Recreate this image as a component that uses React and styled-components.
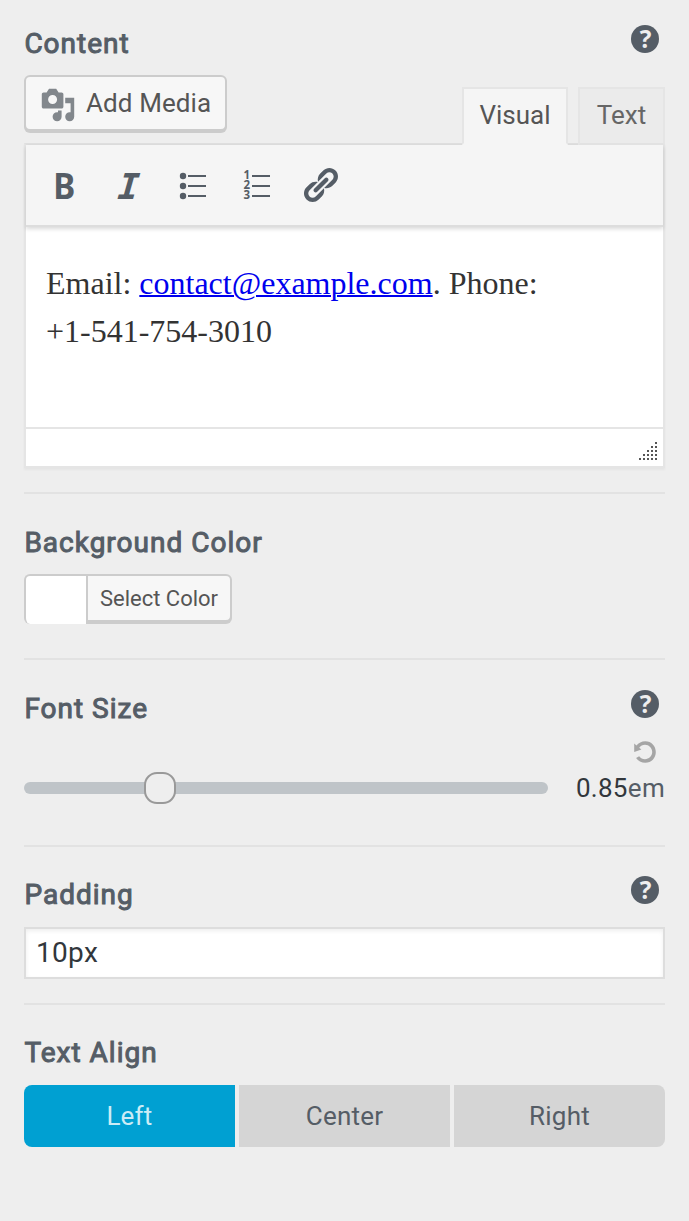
import React from "react";
import styled, { createGlobalStyle } from "styled-components";

const Global = createGlobalStyle`
  *, *::before, *::after { box-sizing: border-box; }
  body { margin: 0; background: #eee; color: #555d66; font-family: Roboto, sans-serif; }
  button, input { font-family: inherit; margin: 0; }
`;

const Panel = styled.main`
  width: 689px;
  min-height: 1221px;
  padding: 0 24px;
  background: #eee;
`;

const Control = styled.section`
  height: ${(p) => p.$height}px;
  padding-top: ${(p) => p.$top}px;
  border-bottom: ${(p) => (p.$last ? "none" : "2px solid #e2e2e2")};
`;

const ControlHead = styled.header`
  display: flex;
  justify-content: space-between;
  height: 40px;
  padding-right: 6px;
`;

const Title = styled.h2`
  margin: 4.5px 0 0 0.4px;
  font-size: 28px;
  line-height: 32px;
  font-weight: 400;
  letter-spacing: 1px;
  -webkit-text-stroke: 1px #555d66;
  color: #555d66;
  white-space: nowrap;
`;

const HelpSvg = styled.svg`
  display: block;
  width: 28px;
  height: 28px;
  margin-top: 2px;
  overflow: visible;
  fill: #555d66;
`;

const Glyph = styled.text`
  font-family: ${(p) => p.$family || '"Open Sans"'}, sans-serif;
  font-size: ${(p) => p.$size}px;
  font-weight: 700;
  font-style: ${(p) => (p.$italic ? "italic" : "normal")};
  fill: ${(p) => p.$fill || "#555d66"};
`;

const EditorTop = styled.div`
  display: flex;
  justify-content: space-between;
  align-items: flex-start;
  height: 80px;
  padding-top: 12px;
`;

const MediaButton = styled.button`
  display: flex;
  align-items: center;
  gap: 10px;
  width: 203px;
  height: 56px;
  padding: 0 0 0 14px;
  border: 2px solid #ccc;
  border-radius: 6px;
  background: #f7f7f7;
  box-shadow: 0 2px 0 #ccc;
  color: #555;
  font-size: 26px;
  letter-spacing: 0.1px;
  white-space: nowrap;
`;

const MediaIcon = styled.svg`
  width: 36px;
  height: 36px;
  margin-top: 3px;
  flex: none;
  fill: #82878c;
`;

const Tabs = styled.div`
  display: flex;
  gap: 10px;
  padding-top: 12px;
`;

const Tab = styled.button`
  position: relative;
  z-index: ${(p) => (p.$active ? 2 : 0)};
  width: ${(p) => p.$width}px;
  height: 58px;
  padding: 0 0 2px;
  border: 2px solid #e5e5e5;
  border-bottom-color: ${(p) => (p.$active ? "#f5f5f5" : "#e2e2e2")};
  background: ${(p) => (p.$active ? "#f5f5f5" : "#ebebeb")};
  color: ${(p) => (p.$active ? "#555" : "#666")};
  font-size: 26px;
`;

const Editor = styled.div`
  height: 325px;
  border: 2px solid #e5e5e5;
  border-top-color: #dfdfdf;
  background: #fff;
  box-shadow: 0 2px 2px rgba(0, 0, 0, 0.04);
`;

const Toolbar = styled.div`
  display: flex;
  align-items: center;
  gap: 24px;
  height: 82px;
  padding-left: 19px;
  border-bottom: 2px solid #ddd;
  background: #f5f5f5;
  box-shadow: 0 2px 4px rgba(0, 0, 0, 0.15);
`;

const ToolIcon = styled.svg`
  width: 40px;
  height: 40px;
  flex: none;
  overflow: visible;
  fill: #555d66;
`;

const Body = styled.div`
  height: 200px;
  padding: 32px 20px 0;
  color: #333;
  font: 32px/48px "Liberation Serif", serif;

  p { margin: 0; }
  a { color: #0000ee; text-decoration-thickness: 2px; }
`;

const StatusBar = styled.div`
  display: flex;
  justify-content: flex-end;
  height: 39px;
  padding: 13px 6px 0 0;
  border-top: 2px solid #e5e5e5;
`;

const Grip = styled.svg`
  width: 18px;
  height: 18px;
  fill: #555;
`;

const ColorPicker = styled.button`
  display: flex;
  width: 208px;
  height: 50px;
  margin-top: 12px;
  padding: 0;
  border: 0;
  background: none;
`;

const Swatch = styled.span`
  width: 62px;
  height: 50px;
  border: 2px solid #ccc;
  border-width: 2px 0 0 2px;
  border-radius: 6px 0 0 6px;
  background: #fff;
`;

const PickerLabel = styled.span`
  width: 146px;
  height: 48px;
  border: 2px solid #ccc;
  border-radius: 0 6px 6px 0;
  background: #f7f7f7;
  box-shadow: 0 2px 0 #ccc;
  color: #555;
  font-size: 22px;
  line-height: 45px;
  text-align: center;
  white-space: nowrap;
`;

const RangeRow = styled.div`
  display: flex;
  align-items: flex-end;
  justify-content: space-between;
  height: 76px;
`;

const Track = styled.div`
  display: flex;
  align-items: center;
  width: 524px;
  height: 12px;
  margin-bottom: 10px;
  padding-left: 120px;
  border-radius: 6px;
  background: #bfc4c8;
`;

const Thumb = styled.span`
  width: 32px;
  height: 32px;
  flex: none;
  border: 2px solid #999;
  border-radius: 13px;
  background: #eee;
`;

const RangeValue = styled.div`
  display: flex;
  flex-direction: column;
  align-items: flex-end;
  height: 76px;
  padding-top: 12px;
  font-size: 26px;
  line-height: 49px;
  letter-spacing: 0.3px;
  white-space: nowrap;

  b { font-weight: 400; color: #32373c; }
`;

const ResetIcon = styled.svg`
  width: 24px;
  height: 24px;
  margin-right: 8px;
  flex: none;
  fill: #a5a5a5;
`;

const TextField = styled.input`
  display: block;
  width: 641px;
  height: 52px;
  margin-top: 13px;
  padding: 0 10px 2px;
  border: 2px solid #ddd;
  border-radius: 0;
  outline: 0;
  background: #fff;
  box-shadow: inset 0 2px 4px rgba(0, 0, 0, 0.07);
  color: #32373c;
  font-size: 28px;
  letter-spacing: 0.3px;
`;

const Segments = styled.div`
  display: grid;
  grid-template-columns: repeat(3, 211px);
  gap: 4px;
  height: 62px;
  margin-top: 13px;
  border-radius: 8px;
  overflow: hidden;
`;

const Segment = styled.button`
  padding: 0;
  border: 0;
  background: ${(p) => (p.$active ? "#00a0d2" : "#d5d5d5")};
  color: ${(p) => (p.$active ? "#ccecf6" : "#555d66")};
  font-size: 26px;
  letter-spacing: 0.2px;
`;

const Help = () => (
  <HelpSvg viewBox="0 0 28 28">
    <circle cx="14" cy="14" r="14" />
    <Glyph x="14.5" y="22.8" textAnchor="middle" $size={24.5} $fill="#eee">?</Glyph>
  </HelpSvg>
);

const rows = [10, 20, 30];
const grip = [0, 1, 2, 3, 4];

export default function App() {
  return (
    <>
      <Global />
      <Panel>
        <Control $height={494} $top={23}>
          <ControlHead>
            <Title>Content</Title>
            <Help />
          </ControlHead>
          <EditorTop>
            <MediaButton>
              <MediaIcon viewBox="0 0 20 20">
                <path d="M13 11V4c0-.55-.45-1-1-1h-1.67L9 1H5L3.67 3H2c-.55 0-1 .45-1 1v7c0 .55.45 1 1 1h10c.55 0 1-.45 1-1zM7 4.5c1.38 0 2.5 1.12 2.5 2.5S8.38 9.5 7 9.5 4.5 8.38 4.5 7 5.62 4.5 7 4.5zM14 6h5v10.5c0 1.38-1.12 2.5-2.5 2.5S14 17.88 14 16.5s1.12-2.5 2.5-2.5c.17 0 .34.02.5.05V9h-3V6zm-4 8.05V13h2v3.5c0 1.38-1.12 2.5-2.5 2.5S7 17.88 7 16.5 8.12 14 9.5 14c.17 0 .34.02.5.05z" />
              </MediaIcon>
              Add Media
            </MediaButton>
            <Tabs>
              <Tab $width={106} $active>Visual</Tab>
              <Tab $width={87}>Text</Tab>
            </Tabs>
          </EditorTop>
          <Editor>
            <Toolbar>
              <ToolIcon viewBox="0 0 40 40">
                <Glyph x="8.2" y="34" $size={36.4} $family={'"Noto Sans"'} textLength="22" lengthAdjust="spacingAndGlyphs">B</Glyph>
              </ToolIcon>
              <ToolIcon viewBox="0 0 40 40">
                <Glyph x="8.8" y="34" $size={35.7} $italic $family={'"DejaVu Sans Mono"'} transform="translate(2.3 0) skewX(-5)">I</Glyph>
              </ToolIcon>
              <ToolIcon viewBox="0 0 40 40">
                {rows.map((y) => (
                  <g key={y}>
                    <circle cx="10" cy={y + 1} r="3.2" />
                    <rect x="15" y={y} width="18" height="2" />
                  </g>
                ))}
              </ToolIcon>
              <ToolIcon viewBox="0 0 40 40">
                {rows.map((y, i) => (
                  <g key={y}>
                    <Glyph x="6.6" y={y + 4} $size={11.5}>{i + 1}</Glyph>
                    <rect x="15" y={y} width="18" height="2" />
                  </g>
                ))}
              </ToolIcon>
              <ToolIcon viewBox="0.5 0 20 20">
                <path d="M17.74 2.76c1.68 1.69 1.68 4.41 0 6.1l-1.53 1.52c-1.12 1.12-2.7 1.47-4.14 1.09l2.62-2.61.76-.77.76-.76c.84-.84.84-2.2 0-3.04-.84-.85-2.2-.85-3.04 0l-.77.76-3.38 3.38c-.37-1.44-.02-3.02 1.1-4.14l1.52-1.53c1.69-1.68 4.42-1.68 6.1 0zM8.59 13.43l5.34-5.34c.42-.42.42-1.1 0-1.52-.44-.43-1.13-.39-1.53 0l-5.33 5.34c-.42.42-.42 1.1 0 1.52.44.43 1.13.39 1.52 0zm-.76 2.29l4.14-4.15c.38 1.44.03 3.02-1.09 4.14l-1.52 1.53c-1.69 1.68-4.41 1.68-6.1 0-1.68-1.68-1.68-4.42 0-6.1l1.53-1.52c1.12-1.12 2.7-1.47 4.14-1.1l-4.14 4.15c-.85.84-.85 2.2 0 3.05.84.84 2.2.84 3.04 0z" />
              </ToolIcon>
            </Toolbar>
            <Body>
              <p>Email: <a href="mailto:contact@example.com">contact@example.com</a>. Phone:<br />+1-541-754-3010</p>
            </Body>
            <StatusBar>
              <Grip viewBox="0 0 18 18">
                {grip.flatMap((r) =>
                  grip.filter((c) => c >= 4 - r).map((c) => (
                    <rect key={`${r}-${c}`} x={c * 4} y={r * 4} width="2" height="2" />
                  ))
                )}
              </Grip>
            </StatusBar>
          </Editor>
        </Control>

        <Control $height={166} $top={28}>
          <ControlHead><Title>Background Color</Title></ControlHead>
          <ColorPicker>
            <Swatch />
            <PickerLabel>Select Color</PickerLabel>
          </ColorPicker>
        </Control>

        <Control $height={187} $top={28}>
          <ControlHead><Title>Font Size</Title><Help /></ControlHead>
          <RangeRow>
            <Track><Thumb /></Track>
            <RangeValue>
              <ResetIcon viewBox="0 0 20 20">
                <path d="M10.25 1.02c5.1 0 8.75 4.04 8.75 9s-3.65 9-8.75 9c-3.2 0-6.02-1.59-7.68-3.99l2.59-1.52c1.1 1.5 2.86 2.51 4.84 2.51 3.3 0 6-2.79 6-6s-2.7-6-6-6c-1.97 0-3.72 1-4.82 2.49L7 8.02l-6 2v-7L2.89 4.6c1.69-2.17 4.36-3.58 7.36-3.58z" />
              </ResetIcon>
              <span><b>0.85</b>em</span>
            </RangeValue>
          </RangeRow>
        </Control>

        <Control $height={158} $top={27}>
          <ControlHead><Title>Padding</Title><Help /></ControlHead>
          <TextField defaultValue="10px" />
        </Control>

        <Control $height={216} $top={27} $last>
          <ControlHead><Title>Text Align</Title></ControlHead>
          <Segments>
            <Segment $active>Left</Segment>
            <Segment>Center</Segment>
            <Segment>Right</Segment>
          </Segments>
        </Control>
      </Panel>
    </>
  );
}
